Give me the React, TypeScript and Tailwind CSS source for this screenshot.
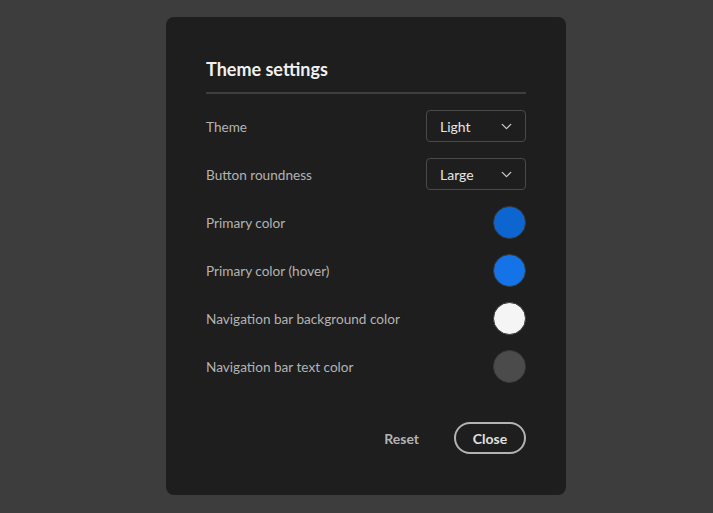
import React from 'react';
import { ChevronDown } from 'lucide-react';

const font = { fontFamily: '"Source Sans Pro", Lato, "Noto Sans", sans-serif' };

const Select: React.FC<{ value: string }> = ({ value }) => (
    <div className="w-[100px] h-8 flex items-center justify-between pl-[13px] pr-[10px] border border-[#4a4a4a] rounded-[4px] text-[14px] text-[#e6e6e6]">
        <span>{value}</span>
        <ChevronDown size={17} strokeWidth={1.75} className="text-[#cfcfcf]" />
    </div>
);

const Swatch: React.FC<{ color: string }> = ({ color }) => (
    <div className={`w-[33px] h-[33px] rounded-full border border-[#3a3a3a] ${color}`} />
);

const rows: { label: string; control: React.ReactNode }[] = [
    { label: 'Theme', control: <Select value="Light" /> },
    { label: 'Button roundness', control: <Select value="Large" /> },
    { label: 'Primary color', control: <Swatch color="bg-[#0d66d0]" /> },
    { label: 'Primary color (hover)', control: <Swatch color="bg-[#1473e6]" /> },
    { label: 'Navigation bar background color', control: <Swatch color="bg-[#f5f5f5]" /> },
    { label: 'Navigation bar text color', control: <Swatch color="bg-[#4b4b4b]" /> },
];

export default function App() {
    return (
        <div className="min-h-[513px] bg-[#3d3d3d] pt-[17px] pl-[166px]" style={font}>
            <div className="w-[400px] bg-[#1e1e1e] rounded-[8px] px-10 pt-10 pb-[41px]">
                <h2 className="text-[18px] leading-6 font-bold text-[#f0f0f0]">Theme settings</h2>
                <div className="h-[2px] bg-[#3e3e3e] mt-[11px]" />
                <div className="flex flex-col gap-4 mt-4">
                    {rows.map((r) => (
                        <div key={r.label} className="flex items-center justify-between h-8">
                            <span className="text-[13.6px] leading-5 mt-[1px] text-[#b3b3b3]">{r.label}</span>
                            {r.control}
                        </div>
                    ))}
                </div>
                <div className="flex justify-end items-center gap-4 mt-10">
                    <button className="h-8 px-[19px] text-[14px] font-bold text-[#b3b3b3]">Reset</button>
                    <button className="h-8 w-[72px] rounded-full border-2 border-[#b3b3b3] text-[14px] font-bold text-[#e0e0e0]">Close</button>
                </div>
            </div>
        </div>
    );
}
